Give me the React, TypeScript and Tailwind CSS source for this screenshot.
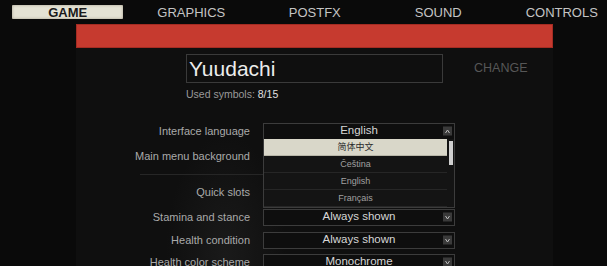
import React from "react";

const font = { fontFamily: '"Liberation Sans", "Noto Sans CJK SC", sans-serif' };

function Arrow({ up = false }: { up?: boolean }) {
  return (
    <div className="absolute right-[2px] top-1/2 -translate-y-1/2 w-[9px] h-[9px] bg-[#3a3a3a] flex items-center justify-center">
      <svg width="5" height="4" viewBox="0 0 5 4">
        {up ? (
          <path d="M0.5 3.5 L2.5 0.5 L4.5 3.5" stroke="#bdbdbd" strokeWidth="1" fill="none" />
        ) : (
          <path d="M0.5 0.5 L2.5 3.5 L4.5 0.5" stroke="#bdbdbd" strokeWidth="1" fill="none" />
        )}
      </svg>
    </div>
  );
}

function Select({ value, up = false }: { value: string; up?: boolean }) {
  return (
    <div className="relative w-[192px] h-[17px] border border-[#3c3c3c] bg-[#0e0e0e] flex items-center justify-center text-[11.5px] text-[#d6d6d6] leading-none">
      {value}
      <Arrow up={up} />
    </div>
  );
}

function Row({
  label,
  children,
  className = "",
}: {
  label: string;
  children?: React.ReactNode;
  className?: string;
}) {
  return (
    <div className={"flex items-center " + className}>
      <div className="w-[174px] text-right text-[11px] text-[#aaaaaa] leading-none">{label}</div>
      <div className="ml-[13px]">{children}</div>
    </div>
  );
}

export default function App() {
  const tabs = ["GAME", "GRAPHICS", "POSTFX", "SOUND", "CONTROLS"];
  const langs = ["简体中文", "Čeština", "English", "Français"];
  return (
    <div
      className="w-[607px] h-[266px] overflow-hidden bg-[#0a0a0a] relative"
      style={font}
    >
      {/* nav */}
      <div className="h-[24px] pl-[6px] grid grid-cols-[repeat(5,123.5px)] items-center">
        {tabs.map((t, i) => (
          <div key={t} className="flex justify-center">
            {i === 0 ? (
              <div className="w-[111px] h-[14px] bg-[#e4e2d4] rounded-[1px] flex items-center justify-center text-[13px] font-bold text-[#1a1a1a] leading-none shadow-[inset_0_0_3px_rgba(120,110,90,0.6)]">
                {t}
              </div>
            ) : (
              <div className="text-[13px] text-[#c4c4c4] leading-none">{t}</div>
            )}
          </div>
        ))}
      </div>

      {/* panel */}
      <div className="ml-[76px] w-[477px] h-[242px] bg-[#0f0f0f] bg-[radial-gradient(ellipse_60px_120px_at_150px_230px,#1a1a1a,transparent)] relative">
        <div className="h-[24px] bg-[#c63a2f] border border-[#a52c23]" />

        {/* name */}
        <div className="flex items-center mt-[6px] ml-[110px]">
          <div className="w-[257px] h-[29px] border border-[#3a3a3a] flex items-center pl-[2px] text-[21px] text-[#ececec] leading-none">
            Yuudachi
          </div>
          <div className="ml-[31px] text-[12.5px] text-[#575757] leading-none">CHANGE</div>
        </div>
        <div className="ml-[110px] mt-[6px] text-[10.5px] text-[#9a9a9a] leading-none">
          Used symbols: <span className="text-[#e0e0e0]">8/15</span>
        </div>

        {/* settings rows */}
        <div className="mt-[23px] flex flex-col">
          <Row label="Interface language">
            <Select value="English" up />
          </Row>
          <Row label="Main menu background" className="mt-[8px] h-[18px]" />
          <div className="mt-[8px] ml-[64px] w-[123px] h-px bg-[#262626]" />
          <Row label="Quick slots" className="mt-[10px] h-[16px]" />
          <Row label="Stamina and stance" className="mt-[8px]">
            <Select value="Always shown" />
          </Row>
          <Row label="Health condition" className="mt-[6px]">
            <Select value="Always shown" />
          </Row>
          <Row label="Health color scheme" className="mt-[5px]">
            <Select value="Monochrome" />
          </Row>
        </div>

        {/* dropdown list overlay */}
        <div className="absolute left-[187px] top-[115px] w-[192px] h-[69px] border border-[#3c3c3c] border-t-0 bg-[#141414]">
          {langs.map((l, i) => (
            <div
              key={l}
              className={
                "w-[183px] h-[17px] flex items-center justify-center text-[9px] leading-none border-b " +
                (i === 0
                  ? "bg-[#d9d7c9] text-[#2a2a2a] border-[#b8b6a8]"
                  : "text-[#a0a0a0] border-[#262626]")
              }
            >
              {l}
            </div>
          ))}
          <div className="absolute right-[1px] top-[2px] w-[4px] h-[24px] bg-[#d0d0d0]" />
        </div>
      </div>
    </div>
  );
}
